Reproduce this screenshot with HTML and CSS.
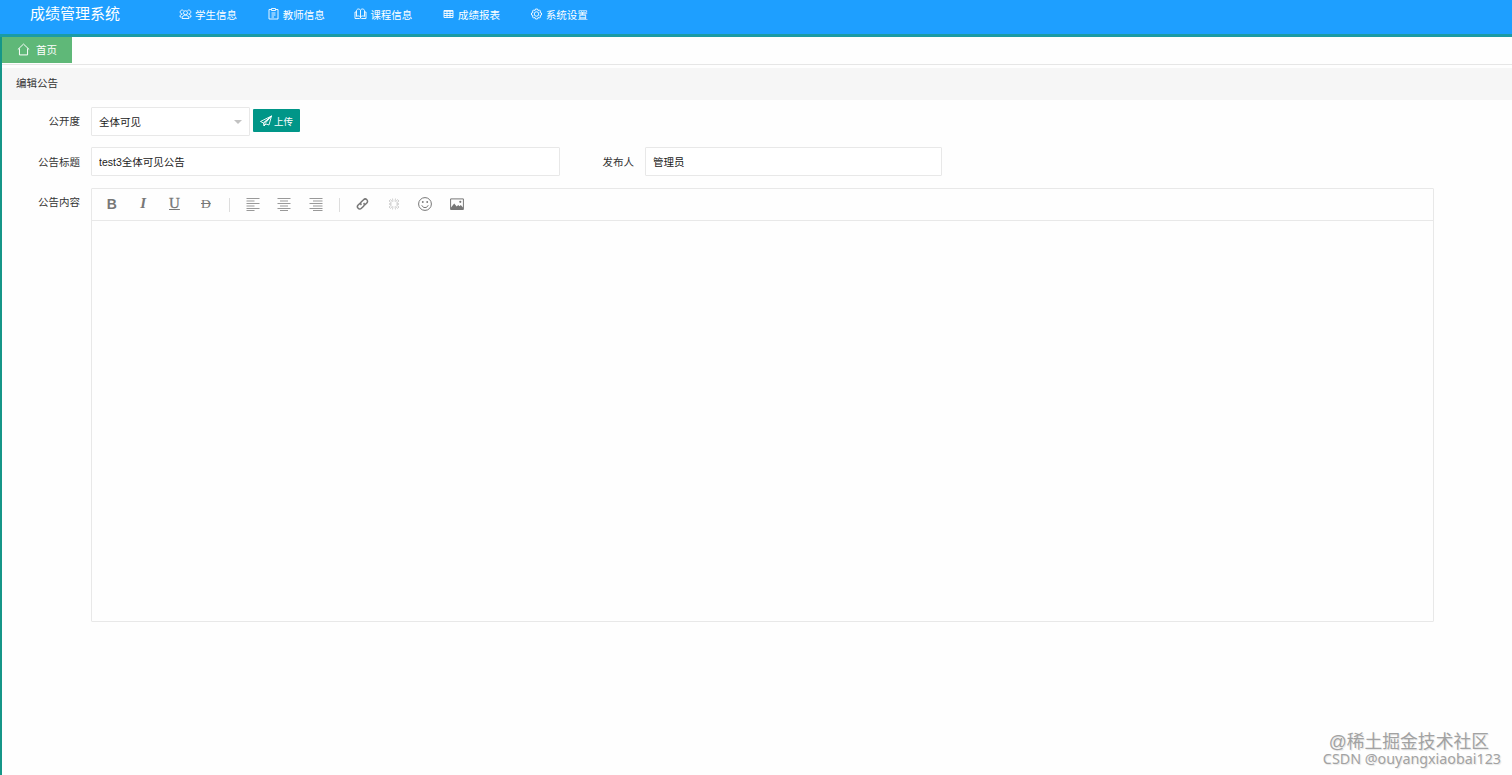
FILE: index.html
```
<!DOCTYPE html>
<html lang="zh-CN">
<head>
    <meta charset="UTF-8">
    <meta name="viewport" content="width=device-width, initial-scale=1.0">
    <title>成绩管理系统</title>
    <link rel="stylesheet" href="styles.css">
</head>
<body>
    <header class="header">
        <div class="logo">成绩管理系统</div>
        <nav class="nav">
            <a class="nav-item">
                <svg viewBox="0 0 24 24"><circle cx="12" cy="9.500" r="4"/><path d="M5 21c0-9 14-9 14 0zM8 5a4 4 0 1 0-2 7M16 5a4 4 0 1 1 2 7M5 12c-3 1-4 3-4 6h3M19 12c3 1 4 3 4 6h-3"/></svg>
                <span>学生信息</span>
            </a>
            <a class="nav-item">
                <svg viewBox="0 0 24 24"><path d="M7 3H3v19h18V3h-4M8 1h8v4H8zM8 10h8M8 14h8M8 18h5"/></svg>
                <span>教师信息</span>
            </a>
            <a class="nav-item">
                <svg viewBox="0 0 24 24"><path d="M12 5v15M12 5c-1-4-7-4-8 0v12c3-2 6-1 8 1 2-2 5-3 8-1V5c-1-4-7-4-8 0M4 8H1v13h9l2-1 2 1h9V8h-3"/></svg>
                <span>课程信息</span>
            </a>
            <a class="nav-item">
                <svg viewBox="0 0 24 24"><path d="M3 5h18v14H3zM3 6.500h18M3 11h18M3 15h18M9 5v14M15 5v14"/></svg>
                <span>成绩报表</span>
            </a>
            <a class="nav-item">
                <svg viewBox="0 0 24 24"><path d="M10 2h4l1 3 3-1 2 2-1 3 3 1v4l-3 1 1 3-2 2-3-1-1 3h-4l-1-3-3 1-2-2 1-3-3-1v-4l3-1-1-3 2-2 3 1z"/><circle cx="12" cy="12" r="4.500"/></svg>
                <span>系统设置</span>
            </a>
        </nav>
    </header>

    <main class="main">
        <div class="tabs">
            <div class="tab">
                <svg viewBox="0 0 24 24"><path d="M1.500 12L12 2l10.500 10M4.500 10v12h15V10"/></svg>
                <span>首页</span>
            </div>
        </div>

        <div class="quote">编辑公告</div>

        <form class="form">
            <div class="row row-scope">
                <label class="label">公开度</label>
                <div class="select">
                    <span>全体可见</span>
                    <i class="arrow"></i>
                </div>
                <button type="button" class="upload">
                    <svg viewBox="0 0 24 24"><path d="M23 2L1 13l6 3zM23 2L7 16l1 6 4-4 6 2zM8 22l2.500-5.500L23 2"/></svg>
                    <span>上传</span>
                </button>
            </div>

            <div class="row">
                <label class="label">公告标题</label>
                <input class="input input-title" type="text" value="test3全体可见公告">
                <label class="label label-author">发布人</label>
                <input class="input input-author" type="text" value="管理员">
            </div>

            <div class="row row-content">
                <label class="label label-top">公告内容</label>
                <div class="editor">
                    <div class="toolbar">
                        <span class="tool bold">B</span>
                        <span class="tool italic">I</span>
                        <span class="tool underline">U</span>
                        <span class="tool strike">D</span>
                        <span class="line"></span>
                        <span class="tool align"><svg viewBox="0 0 14 14"><path d="M.5 1.500h13M.5 4h8M.5 6.500h13M.5 9h8M.5 11.500h13M.5 13.500h8"/></svg></span>
                        <span class="tool align"><svg viewBox="0 0 14 14"><path d="M.5 1.500h13M3 4h8M.5 6.500h13M3 9h8M.5 11.500h13M3 13.500h8"/></svg></span>
                        <span class="tool align"><svg viewBox="0 0 14 14"><path d="M.5 1.500h13M4 4h9.500M.5 6.500h13M4 9h9.500M.5 11.500h13M4 13.500h9.500"/></svg></span>
                        <span class="line"></span>
                        <span class="tool link"><svg viewBox="0 0 24 24"><path d="M10 14c-2-2-2-4 0-6l4-4c4-4 10 2 6 6l-4 4M14 10c2 2 2 4 0 6l-4 4c-4 4-10-2-6-6l4-4"/></svg></span>
                        <span class="tool unlink"><svg viewBox="0 0 24 24"><path d="M9 8L5 3 2 6l5 4-5 2 5 2-5 4 3 3 4-5M15 8l4-5 3 3-5 4 5 2-5 2 5 4-3 3-4-5M9 1l1 6M15 1l-1 6M9 23l1-6M15 23l-1-6"/></svg></span>
                        <span class="tool face"><svg viewBox="0 0 14 14"><circle cx="7" cy="7" r="6.400"/><path d="M3.800 8.300c1 3 5.400 3 6.400 0"/><circle class="dot" cx="4.800" cy="5" r=".9"/><circle class="dot" cx="9.200" cy="5" r=".9"/></svg></span>
                        <span class="tool image"><svg viewBox="0 0 14 14"><path d="M.6 1.900h12.800v10.600H.6z"/><path class="dot" d="M1 12V10.500l3.200-4 2.500 3 1.500-1.500 1.300 1.300 1.300-1.200L13 10.500V12z"/><circle class="dot" cx="10.300" cy="4.800" r="1.100"/></svg></span>
                    </div>
                    <div class="editor-body"></div>
                </div>
            </div>
        </form>
    </main>

    <div class="watermark">
        <p class="mark-site">@稀土掘金技术社区</p>
        <p class="mark-user">CSDN @ouyangxiaobai123</p>
    </div>
</body>
</html>
```
FILE: styles.css
```
* {
    box-sizing: border-box;
}

body {
    margin: 0;
    height: 775px;
    overflow: hidden;
    display: flex;
    flex-direction: column;
    background-color: #fefefe;
    color: #333;
    font-family: "Liberation Sans", "Noto Sans CJK SC", sans-serif;
    font-size: 10.5px;
}

svg {
    display: block;
    fill: none;
    stroke: currentColor;
    stroke-width: 1.8;
}

/* Header */
.header {
    display: flex;
    height: 37px;
    flex-shrink: 0;
    background-color: #1e9fff;
    border-bottom: 3px solid #1b9ba5;
    color: #fff;
}

.logo {
    width: 179px;
    padding-left: 30px;
    font-size: 15px;
    line-height: 28px;
}

.nav {
    display: flex;
    height: 28px;
}

.nav-item {
    display: flex;
    align-items: center;
    gap: 3px;
    width: 87.700px;
}

.nav-item svg {
    width: 13px;
    height: 12px;
}

/* Page */
.main {
    flex: 1;
    border-left: 2px solid #159688;
}

.tabs {
    height: 28px;
    border-bottom: 1px solid #e6e6e6;
}

.tab {
    display: flex;
    align-items: center;
    gap: 6px;
    width: 70px;
    height: 26px;
    padding-left: 15px;
    padding-bottom: 2px;
    background-color: #5fb878;
    color: #fff;
}

.tab svg {
    width: 13px;
    height: 13px;
}

.quote {
    height: 32px;
    margin-top: 3px;
    padding-left: 14px;
    background-color: #f6f6f6;
    line-height: 31px;
}

/* Form */
.form {
    padding-top: 7px;
}

.row {
    display: flex;
    align-items: center;
    height: 29px;
    margin-bottom: 11px;
}

.row-scope .label,
.row-scope .upload {
    margin-bottom: 2px;
}

.row-content {
    align-items: flex-start;
    height: auto;
    margin-top: 12px;
}

.label {
    width: 89px;
    padding-right: 11px;
    text-align: right;
}

.label-top {
    line-height: 28px;
}

.label-author {
    width: 85px;
}

.input,
.select {
    height: 29px;
    padding: 0 7px;
    border: 1px solid #e8e8e8;
    border-radius: 1px;
    background-color: #fff;
    color: #222;
    font: inherit;
}

.input-title {
    width: 469px;
}

.input-author {
    width: 297px;
}

.select {
    display: flex;
    align-items: center;
    justify-content: space-between;
    width: 159px;
}

.arrow {
    border: 4.500px solid transparent;
    border-top-color: #c2c2c2;
    border-bottom: 0;
}

.upload {
    display: flex;
    align-items: center;
    gap: 2px;
    width: 47px;
    height: 23px;
    margin-left: 3px;
    padding: 0 7px;
    border: 0;
    border-radius: 1px;
    background-color: #009688;
    color: #fff;
    font: inherit;
    font-size: 9.500px;
    white-space: nowrap;
}

.upload svg {
    width: 12px;
    height: 12px;
}

/* Editor */
.editor {
    width: 1343px;
    height: 434px;
    border: 1px solid #e8e8e8;
    border-radius: 1px;
}

.toolbar {
    display: flex;
    align-items: center;
    height: 32px;
    padding-left: 4px;
    padding-bottom: 2px;
    border-bottom: 1px solid #e8e8e8;
    color: #777;
}

.tool {
    display: flex;
    justify-content: center;
    width: 31.400px;
}

.tool svg {
    width: 14px;
    height: 14px;
    stroke-width: 1;
}

.tool .dot {
    fill: currentColor;
    stroke: none;
}

.bold {
    font-size: 14px;
    font-weight: bold;
}

.italic,
.underline,
.strike {
    font-family: "Liberation Serif", serif;
    font-size: 15px;
}

.italic {
    font-style: italic;
    font-weight: bold;
}

.underline {
    text-decoration: underline;
    -webkit-text-stroke: 0.3px #777;
}

.strike {
    font-size: 13.500px;
    text-decoration: line-through;
}

.align {
    color: #999;
}

.line {
    width: 1px;
    height: 14px;
    margin: 2px 7.300px 0;
    background-color: #ddd;
}

.link svg {
    width: 13px;
    stroke-width: 2.800;
}

.unlink svg {
    width: 12px;
    stroke: #ccc;
    stroke-width: 1.800;
}

/* Watermark */
.watermark {
    position: absolute;
    right: 11px;
    bottom: 8px;
    color: #a2a2a2;
    text-align: right;
    text-shadow: 1px 1px 1px #e4e4e4;
}

.watermark p {
    margin: 0;
}

.mark-site {
    padding-right: 12px;
    font-size: 17.800px;
    line-height: 18px;
}

.mark-user {
    font-family: "Noto Sans", sans-serif;
    font-size: 14.300px;
    line-height: 16px;
}
```
